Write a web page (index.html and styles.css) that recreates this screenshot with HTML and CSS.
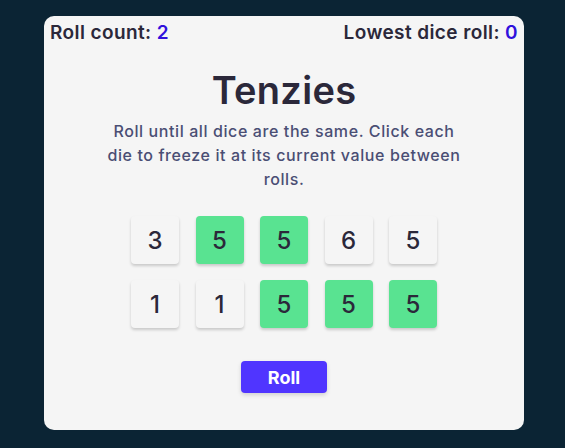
FILE: index.html
```html
<!DOCTYPE html>
<html>
<head>
<meta charset="utf-8">
<link rel="stylesheet" href="styles.css">
</head>
<body>
<main class="card">
  <div class="stats">
    <span>Roll count: <span class="num">2</span></span>
    <span>Lowest dice roll: <span class="num">0</span></span>
  </div>
  <h1 class="title">Tenzies</h1>
  <p class="desc">Roll until all dice are the same. Click each die to freeze it at its current value between rolls.</p>
  <div class="dice">
    <div class="die">3</div>
    <div class="die held">5</div>
    <div class="die held">5</div>
    <div class="die">6</div>
    <div class="die">5</div>
    <div class="die">1</div>
    <div class="die">1</div>
    <div class="die held">5</div>
    <div class="die held">5</div>
    <div class="die held">5</div>
  </div>
  <button class="roll">Roll</button>
</main>
</body>
</html>
```
FILE: styles.css
```css
html, body {
  margin: 0;
  padding: 0;
  background: #0B2434;
  height: 100%;
}
body {
  font-family: "Inter", "Open Sans", sans-serif;
  color: #2B283A;
}
.card {
  margin: 16px 0 0 44px;
  width: 480px;
  height: 414px;
  box-sizing: border-box;
  padding: 6px 6px;
  background: #F5F5F5;
  border-radius: 10px;
  display: flex;
  flex-direction: column;
  align-items: center;
}
.stats {
  align-self: stretch;
  display: flex;
  justify-content: space-between;
  font-size: 19px;
  font-weight: 600;
  letter-spacing: 0.4px;
  line-height: 22px;
}
.num {
  color: #3011DC;
}
.title {
  margin: 22px 0 0;
  font-size: 38px;
  line-height: 48px;
  font-weight: 600;
  letter-spacing: 0.3px;
}
.desc {
  margin: 5px 0 0;
  width: 360px;
  text-align: center;
  font-size: 16px;
  line-height: 24px;
  font-weight: 500;
  letter-spacing: 0.6px;
  color: #4A4E74;
}
.dice {
  margin-top: 25px;
  display: grid;
  grid-template-columns: repeat(5, 48px);
  column-gap: 16.5px;
  row-gap: 16px;
}
.die {
  width: 48px;
  height: 48px;
  border-radius: 4px;
  background: #F5F5F5;
  box-shadow: 0 2px 3px rgba(0, 0, 0, 0.18);
  display: flex;
  align-items: center;
  justify-content: center;
  font-size: 24px;
  font-weight: 500;
}
.die.held {
  background: #59E391;
}
.roll {
  margin-top: 33px;
  width: 86px;
  height: 32px;
  border: none;
  border-radius: 4px;
  background: #5035FF;
  color: #fff;
  font-family: "Inter", sans-serif;
  font-size: 18px;
  font-weight: 700;
  box-shadow: 0 2px 4px rgba(0, 0, 0, 0.15);
}
```
